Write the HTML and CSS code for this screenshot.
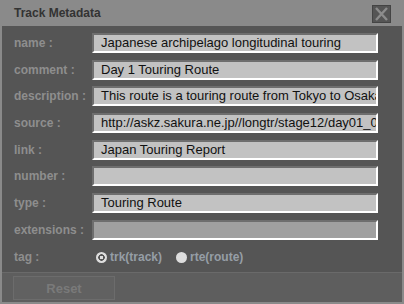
FILE: index.html
```html
<!DOCTYPE html>
<html>
<head>
<meta charset="utf-8">
<link rel="stylesheet" href="styles.css">
</head>
<body>
<div class="dialog">
  <div class="titlebar">
    <span class="title">Track Metadata</span>
    <span class="close"><svg width="17" height="16" viewBox="0 0 17 16"><path d="M3 2 L14 14 M14 2 L3 14" stroke="#8c8c8c" stroke-width="2.4" fill="none"/></svg></span>
  </div>
  <div class="content">
    <div class="form">
      <span class="label">name :</span><div class="field">Japanese archipelago longitudinal touring</div>
      <span class="label">comment :</span><div class="field">Day 1 Touring Route</div>
      <span class="label">description :</span><div class="field">This route is a touring route from Tokyo to Osaka</div>
      <span class="label">source :</span><div class="field">http://askz.sakura.ne.jp//longtr/stage12/day01_02.html</div>
      <span class="label">link :</span><div class="field">Japan Touring Report</div>
      <span class="label">number :</span><div class="field"></div>
      <span class="label">type :</span><div class="field">Touring Route</div>
      <span class="label">extensions :</span><div class="field disabled"></div>
      <span class="label">tag :</span>
      <div class="radios">
        <span class="radio"><span class="dot checked"></span>trk(track)</span>
        <span class="radio"><span class="dot"></span>rte(route)</span>
      </div>
    </div>
  </div>
  <div class="footer">
    <span class="reset">Reset</span>
  </div>
</div>
</body>
</html>
```
FILE: styles.css
```css
html, body { margin: 0; padding: 0; }
body { font-family: "Liberation Sans", Arial, sans-serif; background: #888; }
.dialog {
  width: 404px; height: 304px; box-sizing: border-box;
  border: 2px solid #8a8a8a; border-top: 0;
  background: #555;
  display: flex; flex-direction: column;
}
.titlebar {
  height: 26px; background: #8a8a8a; flex: none;
  display: flex; align-items: center; justify-content: space-between;
  padding: 0 11px 0 12px; box-sizing: border-box;
}
.title { font-weight: bold; font-size: 12px; color: #333; }
.close {
  width: 19px; height: 18px; box-sizing: border-box;
  background: #555; border: 1px solid #444;
  display: flex; align-items: center; justify-content: center;
  margin-top: 1px;
}
.close svg { display: block; }
.content { flex: 1; padding: 7px 24px 0 12px; }
.form {
  display: grid; grid-template-columns: 78px 1fr;
  row-gap: 6.67px; align-items: center;
}
.label { font-weight: bold; font-size: 12px; color: #8e8e8e; }
.field {
  height: 20px; box-sizing: border-box;
  background: #c2c2c2;
  border: 2px solid #fff; border-top-color: #6e6e6e; border-left-color: #6e6e6e;
  font-size: 13px; color: #111; line-height: 16px;
  padding-left: 7px; white-space: nowrap; overflow: hidden;
}
.field.disabled { background: #a0a0a0; }
.radios { display: flex; height: 22px; align-items: center; margin-left: 4px; }
.radio {
  display: inline-flex; align-items: center; gap: 3px;
  font-weight: bold; font-size: 12px; color: #969ea6; margin-right: 14px;
}
.dot {
  width: 11px; height: 11px; border-radius: 50%; background: #ddd; box-sizing: border-box;
}
.dot.checked { background: radial-gradient(circle, #ddd 0 1.5px, #555 2px, #555 3px, #ddd 3.5px); }
.footer {
  height: 30px; flex: none; box-sizing: border-box;
  background: #5e5e5e; border-top: 1px solid #6a6a6a;
  padding: 3px 0 0 11px;
}
.reset {
  display: flex; align-items: center; justify-content: center;
  width: 102px; height: 24px; box-sizing: border-box;
  border: 1px solid #6c6c6c; background: #616161;
  font-weight: bold; font-size: 13px; color: #7a7a7a;
}
```
